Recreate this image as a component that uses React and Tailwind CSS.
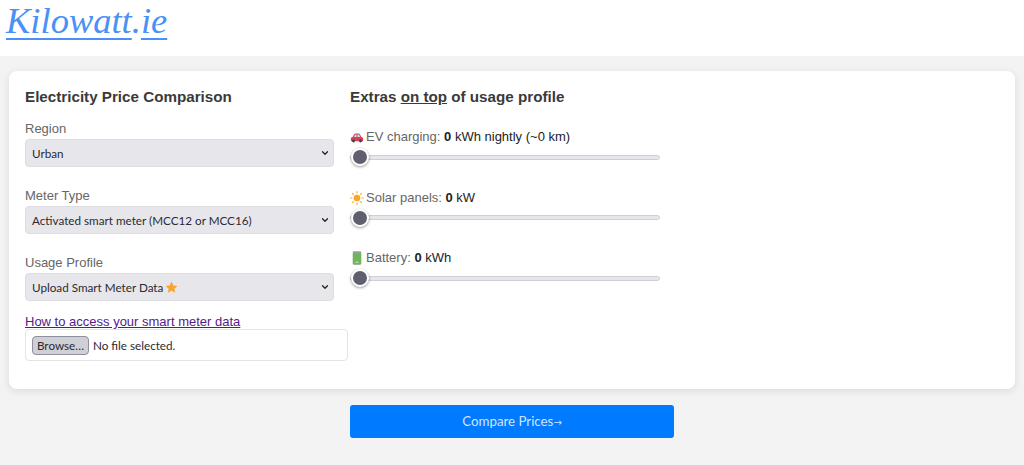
import { ChevronDown } from "lucide-react";

const Star = () => (
  <svg viewBox="0 0 24 24" className="w-[13px] h-[13px] ml-[2px]">
    <path fill="#f7a531" d="M12 1l3.300 7.200 7.700.8-5.800 5.200 1.700 7.700-6.900-4-6.900 4 1.700-7.700L1 9l7.700-.8z" />
  </svg>
);

const Car = () => (
  <svg viewBox="0 0 16 12" className="w-[14px] h-[11px]">
    <path fill="#d9414f" d="M1 7.500c0-1.200.9-1.800 2-2l1.600-3C5 1.700 5.600 1.300 6.400 1.300h3.300c.8 0 1.400.4 1.800 1.200l1.400 3c1.300.2 2.100.8 2.100 2v2c0 .4-.3.7-.7.7H1.700c-.4 0-.7-.3-.7-.7z" />
    <path fill="#bfe0f2" d="M5.800 2.500h1.700v2.800H4.500zM8.500 2.500h1.400c.3 0 .5.1.6.4l1.100 2.400H8.500z" />
    <circle cx="4" cy="10" r="1.600" fill="#3d3d46" />
    <circle cx="12" cy="10" r="1.600" fill="#3d3d46" />
  </svg>
);

const Sun = () => (
  <svg viewBox="0 0 16 16" className="w-[14px] h-[14px]">
    <circle cx="8" cy="8" r="3.800" fill="#f9a72b" />
    <g stroke="#f9a72b" strokeWidth="1.300" strokeLinecap="round">
      <path d="M8 .7v1.600M8 13.700v1.600M.7 8h1.600M13.700 8h1.600M2.800 2.800l1.100 1.100M12.100 12.100l1.100 1.100M2.800 13.200l1.100-1.100M12.100 3.900l1.100-1.100" />
    </g>
  </svg>
);

const Battery = () => (
  <svg viewBox="0 0 12 16" className="w-[10px] h-[14px]">
    <rect x="1" y="0" width="10" height="16" rx="1" fill="#8fa497" />
    <rect x="1" y="2.500" width="10" height="13" rx="1" fill="#6fb65a" />
    <rect x="4" y="12.500" width="4" height="1" fill="#d7eccf" />
  </svg>
);

const Select = ({ children, className }) => (
  <div className={`flex items-center justify-between w-[309px] h-[28px] pl-[6px] pr-[3px] bg-[#e7e7eb] border border-[#dddde1] rounded-[4px] text-[11.7px] text-[#2b2a33] font-['Lato',sans-serif] ${className || ""}`}>
    <span className="flex items-center pt-[1px]">{children}</span>
    <ChevronDown size={10} strokeWidth={3} className="text-[#222]" />
  </div>
);

const Slider = () => (
  <input
    type="range"
    min="0"
    max="100"
    defaultValue="0"
    className="block w-[310px] h-[18px] m-0 appearance-none bg-transparent cursor-pointer [&::-webkit-slider-runnable-track]:h-[5px] [&::-webkit-slider-runnable-track]:rounded-full [&::-webkit-slider-runnable-track]:bg-[#e6e6eb] [&::-webkit-slider-runnable-track]:border [&::-webkit-slider-runnable-track]:border-[#cfcfd6] [&::-webkit-slider-thumb]:appearance-none [&::-webkit-slider-thumb]:w-[18px] [&::-webkit-slider-thumb]:h-[18px] [&::-webkit-slider-thumb]:mt-[-7.5px] [&::-webkit-slider-thumb]:rounded-full [&::-webkit-slider-thumb]:bg-[#5f5f70] [&::-webkit-slider-thumb]:border-2 [&::-webkit-slider-thumb]:border-white [&::-webkit-slider-thumb]:shadow-[0_1px_3px_rgba(0,0,0,0.4)]"
  />
);

const Extra = ({ icon, label, children }) => (
  <div className="mb-[21.5px]">
    <div className="flex items-center h-[20px] text-[13px] text-[#666]">
      <span className="flex justify-center w-[14px] mr-[2px]">{icon}</span>
      <span>{label}:&nbsp;</span>
      <span className="text-[#222]">{children}</span>
    </div>
    <div className="mt-[1px]">
      <Slider />
    </div>
  </div>
);

export default function App() {
  return (
    <div className="min-h-[465px] bg-[#f3f3f3] font-['Liberation_Sans',Arial,sans-serif]">
      {/* Header */}
      <header className="h-[56px] bg-white pl-[6px]">
        <div className="w-fit text-[36.5px] leading-[42px] italic text-[#4a90f5] font-['Liberation_Serif',serif]">
          <a href="#" className="underline decoration-[1.5px] underline-offset-[5px]">Kilowatt</a>
          .
          <a href="#" className="underline decoration-[1.5px] underline-offset-[5px]">ie</a>
        </div>
      </header>

      <main className="px-[9px] pt-[15px]">
        <section className="flex h-[318px] bg-white rounded-[8px] px-[16px] pt-[16px] shadow-[0_2px_8px_rgba(0,0,0,0.1)]">
          {/* Left column */}
          <div className="w-[325px]">
            <h2 className="text-[15.2px] leading-[20px] font-bold text-[#3a3a3a] mb-[14px]">
              Electricity Price Comparison
            </h2>
            <label className="block text-[13px] leading-[16px] text-[#666] mb-[2px]">Region</label>
            <Select className="mb-[21px]">Urban</Select>
            <label className="block text-[13px] leading-[16px] text-[#666] mb-[2px]">Meter Type</label>
            <Select className="mb-[21px]">Activated smart meter (MCC12 or MCC16)</Select>
            <label className="block text-[13px] leading-[16px] text-[#666] mb-[2px]">Usage Profile</label>
            <Select className="mb-[13px]">
              Upload Smart Meter Data
              <Star />
            </Select>
            <a href="#" className="block text-[13px] leading-[15px] text-[#551a8b] underline">
              How to access your smart meter data
            </a>
            <div className="flex items-center w-[323px] h-[32px] pl-[6px] bg-white border border-[#e4e4e4] rounded-[4px] text-[11.7px] text-[#2b2a33] font-['Lato',sans-serif]">
              <span className="flex items-center justify-center w-[57px] h-[19px] pt-[1px] bg-[#cfcfd6] border border-[#8f8f9d] rounded-[4px]">Browse…</span>
              <span className="ml-[4px] pt-[1px]">No file selected.</span>
            </div>
          </div>

          {/* Right column */}
          <div>
            <h2 className="text-[15.2px] leading-[20px] font-bold text-[#3a3a3a] mb-[20px]">
              Extras <span className="underline">on top</span> of usage profile
            </h2>
            <Extra icon={<Car />} label="EV charging">
              <b>0</b> kWh nightly (~0 km)
            </Extra>
            <Extra icon={<Sun />} label="Solar panels">
              <b>0</b> kW
            </Extra>
            <Extra icon={<Battery />} label="Battery">
              <b>0</b> kWh
            </Extra>
          </div>
        </section>

        <div className="flex justify-center mt-[16px]">
          <button className="w-[324px] h-[33px] pt-[1px] bg-[#007bff] rounded-[3px] text-[13.3px] text-[#cfe4ff] font-['Lato',sans-serif]">
            Compare Prices<span className="text-[10px] font-['DejaVu_Sans',sans-serif]">→</span>
          </button>
        </div>
      </main>
    </div>
  );
}
